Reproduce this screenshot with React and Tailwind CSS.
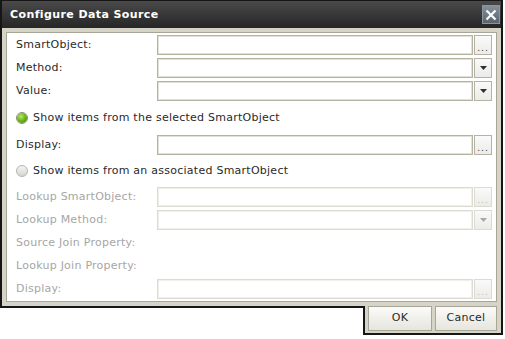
const font = { fontFamily: '"DejaVu Sans", Verdana, sans-serif' };

function Field({ label, kind, disabled }) {
  const labelCls = disabled ? "text-[#a6a6a6]" : "text-[#2a2a2a]";
  return (
    <div className="flex items-center h-[20px]">
      <div className={`w-[141px] shrink-0 text-[11px] tracking-[0.25px] ${labelCls}`}>{label}</div>
      {kind && (
        <div className="flex flex-1 h-[20px]">
          <div
            className={`flex-1 border bg-white ${
              disabled
                ? "border-[#dcdbd2] shadow-[inset_0_0_0_1px_#f0f0ea]"
                : "border-[#b4b2a3] shadow-[inset_0_0_0_1px_#e2e1d8]"
            }`}
          />
          <div
            className={`w-[18px] ml-[1px] flex items-center justify-center border bg-gradient-to-b from-[#fafafa] to-[#ebebe7] ${
              disabled ? "border-[#dcdbd2]" : "border-[#b4b2a3]"
            }`}
          >
            {kind === "dots" ? (
              <span
                className={`text-[9px] leading-none mt-[6px] tracking-[1px] ${
                  disabled ? "text-[#bbb]" : "text-[#333]"
                }`}
              >
                ...
              </span>
            ) : (
              <svg width="7" height="4" viewBox="0 0 7 4">
                <path d="M0 0h7L3.5 4z" fill={disabled ? "#a8a8a8" : "#2b3036"} />
              </svg>
            )}
          </div>
        </div>
      )}
    </div>
  );
}

function Radio({ checked, label, className }) {
  return (
    <div className={`flex items-center ${className}`}>
      <div
        className={`w-[12px] h-[12px] rounded-full border flex items-center justify-center ${
          checked ? "border-[#8a8a80] bg-white" : "border-[#b6b6ae] bg-gradient-to-b from-[#f4f4f2] to-[#d6d6d0]"
        }`}
      >
        {checked && (
          <div className="w-[10px] h-[10px] rounded-full bg-[radial-gradient(circle_at_40%_35%,#b6ec5c,#5aa80e_60%,#3c7d06)]" />
        )}
      </div>
      <span className="ml-[5px] text-[11px] tracking-[0.25px] text-[#2a2a2a]">{label}</span>
    </div>
  );
}

export default function App() {
  return (
    <div className="w-[505px] h-[339px] bg-white" style={font}>
      <div className="w-[503px]">
        <div className="bg-[#161616] px-[2px] pt-[1px]">
          <div className="h-[27px] flex items-center justify-between pl-[8px] pr-[1px] bg-gradient-to-b from-[#4a4a4a] to-[#262626]">
            <span className="text-white font-bold text-[11px] tracking-[0.4px] mt-[1px]">Configure Data Source</span>
            <div className="w-[18px] h-[19px] flex items-center justify-center border border-[#8c959c] bg-gradient-to-b from-[#84909a] to-[#5a656e]">
              <svg width="12" height="12" viewBox="0 0 12 12">
                <path d="M1.5 1.5l9 9M10.5 1.5l-9 9" stroke="#fff" strokeWidth="2.2" />
              </svg>
            </div>
          </div>
          <div className="bg-[#d6d4c6] p-[4px] pb-[4px]">
            <div className="bg-white border border-[#a8a698] pt-[2px] pb-[2px] pl-[9px] pr-[4px]">
              <div className="flex flex-col gap-[3px]">
                <Field label="SmartObject:" kind="dots" />
                <Field label="Method:" kind="arrow" />
                <Field label="Value:" kind="arrow" />
                <Radio checked label="Show items from the selected SmartObject" className="h-[28px]" />
                <Field label="Display:" kind="dots" />
                <Radio label="Show items from an associated SmartObject" className="h-[26px]" />
                <Field label="Lookup SmartObject:" kind="dots" disabled />
                <Field label="Lookup Method:" kind="arrow" disabled />
                <Field label="Source Join Property:" disabled />
                <Field label="Lookup Join Property:" disabled />
                <Field label="Display:" kind="dots" disabled />
              </div>
            </div>
          </div>
        </div>
        <div className="flex items-start">
          <div className="flex-1 h-[2px] bg-[#161616]" />
          <div className="w-[140px] border-x-2 border-b-2 border-[#161616] bg-[#d6d4c6] flex gap-[3px] pl-[3px] pr-[3px] pb-[2px]">
            <button className="w-[64px] h-[25px] border border-[#a8a698] bg-gradient-to-b from-[#fbfbf9] to-[#e6e5de] text-[11px] tracking-[0.25px] text-[#2a2a2a]">
              OK
            </button>
            <button className="w-[62px] h-[25px] border border-[#a8a698] bg-gradient-to-b from-[#fbfbf9] to-[#e6e5de] text-[11px] tracking-[0.25px] text-[#2a2a2a]">
              Cancel
            </button>
          </div>
        </div>
      </div>
    </div>
  );
}
